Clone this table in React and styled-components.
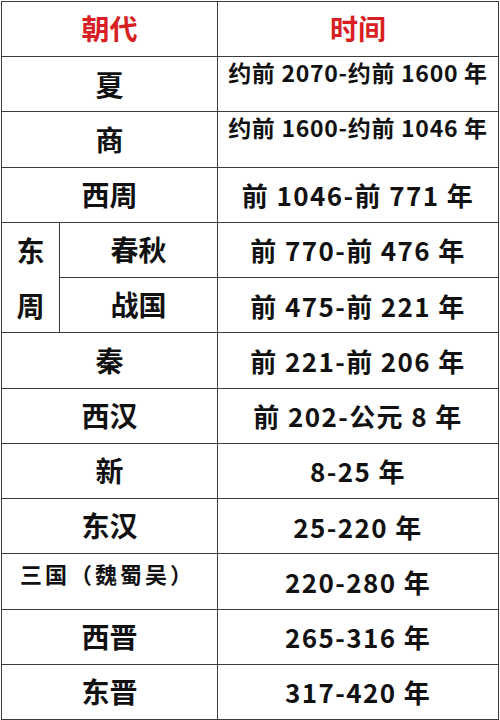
import React from "react";
import styled, { createGlobalStyle } from "styled-components";

const GlobalStyle = createGlobalStyle`
  html, body {
    margin: 0;
    padding: 0;
    background: #ffffff;
  }
  body {
    font-family: "Noto Sans CJK SC", "Noto Sans", sans-serif;
  }
`;

const rows = [
  { name: "夏", time: "约前 2070-约前 1600 年", small: true },
  { name: "商", time: "约前 1600-约前 1046 年", small: true },
  { name: "西周", time: "前 1046-前 771 年" },
  { sub: "春秋", time: "前 770-前 476 年" },
  { sub: "战国", time: "前 475-前 221 年" },
  { name: "秦", time: "前 221-前 206 年" },
  { name: "西汉", time: "前 202-公元 8 年" },
  { name: "新", time: "8-25 年" },
  { name: "东汉", time: "25-220 年" },
  { name: "三国（魏蜀吴）", time: "220-280 年", smallName: true },
  { name: "西晋", time: "265-316 年" },
  { name: "东晋", time: "317-420 年" },
];

const App = () => {
  return (
    <>
      <GlobalStyle />
      <Table>
        <Cell $span={2} $color="#d71f24">
          朝代
        </Cell>
        <Cell $color="#d71f24">时间</Cell>
        {rows.map((row, i) => {
          const line = i + 2;
          if (row.sub) {
            return (
              <React.Fragment key={row.sub}>
                {row.sub === "春秋" && (
                  <EastZhou style={{ gridRow: `${line} / span 2` }}>
                    <span>东</span>
                    <span>周</span>
                  </EastZhou>
                )}
                <Cell $col={2}>{row.sub}</Cell>
                <Cell $size={26} $spacing={1.4}>
                  {row.time}
                </Cell>
              </React.Fragment>
            );
          }
          return (
            <React.Fragment key={row.name}>
              {row.smallName ? (
                <Cell $span={2} $size={22} $spacing={3} $top $left>
                  {row.name}
                </Cell>
              ) : (
                <Cell $span={2}>{row.name}</Cell>
              )}
              {row.small ? (
                <Cell $size={23} $spacing={0.7} $top>
                  {row.time}
                </Cell>
              ) : (
                <Cell $size={26} $spacing={1.4}>
                  {row.time}
                </Cell>
              )}
            </React.Fragment>
          );
        })}
      </Table>
    </>
  );
};

export default App;

const Table = styled.div`
  margin: 1px 0 0 1px;
  width: 498px;
  height: 719px;
  box-sizing: border-box;
  display: grid;
  grid-template-columns: 57px 157px 1fr;
  grid-template-rows: repeat(13, 1fr);
  gap: 1px;
  padding: 1px;
  background: #3c3c3c;
`;

const Cell = styled.div`
  background: #ffffff;
  grid-column: ${props =>
    props.$span ? `span ${props.$span}` : props.$col ? props.$col : "auto"};
  display: flex;
  justify-content: ${props => (props.$left ? "flex-start" : "center")};
  align-items: ${props => (props.$top ? "flex-start" : "center")};
  padding: ${props =>
    props.$left ? "6px 0 0 18px" : props.$top ? "2px 0 0 0" : "0"};
  font-size: ${props => props.$size || 28}px;
  letter-spacing: ${props => props.$spacing || 0}px;
  font-weight: 700;
  line-height: 1.2;
  color: ${props => props.$color || "#111111"};
  white-space: nowrap;
`;

const EastZhou = styled.div`
  background: #ffffff;
  grid-column: 1;
  display: flex;
  flex-direction: column;
  justify-content: space-around;
  align-items: center;
  font-size: 28px;
  font-weight: 700;
  color: #111111;
`;
